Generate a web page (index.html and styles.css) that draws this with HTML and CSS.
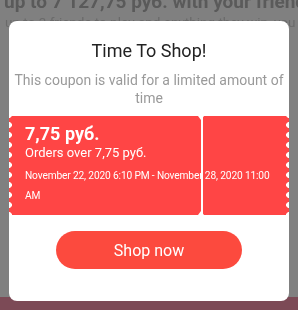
FILE: index.html
```html
<!DOCTYPE html>
<html>
<head>
  <meta charset="UTF-8">
  <title>Time To Shop</title>
  <link rel="stylesheet" href="styles.css">
</head>
<body>
  <div class="page">
    <p class="promo-title">up to 7 127,75 руб. with your friends</p>
    <p class="promo-text">up to 3 friends to play and anything they win, you get</p>
    <div class="page-footer"></div>
  </div>

  <div class="overlay">
    <div class="modal">
      <h2 class="modal-title">Time To Shop!</h2>
      <p class="modal-text">This coupon is valid for a limited amount of time</p>

      <div class="coupon">
        <span class="coupon-divider"></span>
        <div class="coupon-amount">7,75 руб.</div>
        <div class="coupon-cond">Orders over 7,75 руб.</div>
        <div class="coupon-dates">November 22, 2020 6:10 PM - November 28, 2020 11:00 AM</div>
      </div>

      <button class="shop-btn">Shop now</button>
    </div>
  </div>
</body>
</html>
```

FILE: styles.css
```css
:root {
  --overlay-color: #808080;
  --coupon-red: #ff4545;
  --button-red: #fc4a3e;
  --title-color: #222;
  --muted-color: #9a9a9a;
}

* {
  margin: 0;
  padding: 0;
  box-sizing: border-box;
}

body {
  font-family: Roboto, 'Liberation Sans', Arial, sans-serif;
  width: 298px;
  height: 310px;
  overflow: hidden;
  background-color: var(--overlay-color);
}

/* dimmed page behind the popup */
.page {
  height: 310px;
  display: flex;
  flex-direction: column;
  overflow: hidden;
  filter: blur(0.6px);
}

.promo-title {
  font-size: 19px;
  font-weight: 700;
  color: #5a5a5a;
  line-height: 20px;
  margin-top: -8px;
  padding-left: 4px;
  white-space: nowrap;
  overflow: hidden;
}

.promo-text {
  font-size: 13.5px;
  color: #6a6a6a;
  line-height: 18px;
  margin-top: 1px;
  padding-left: 5px;
  white-space: nowrap;
  overflow: hidden;
}

.page-footer {
  margin-top: auto;
  height: 13px;
  background-color: #7c4a56;
}

/* popup */
.overlay {
  position: fixed;
  inset: 0;
  display: flex;
  justify-content: center;
  align-items: flex-start;
  padding-top: 21px;
}

.modal {
  width: 280px;
  background-color: white;
  border-radius: 8px;
  overflow: hidden;
  display: flex;
  flex-direction: column;
  align-items: center;
  padding: 19px 0 32px;
}

.modal-title {
  font-size: 18px;
  font-weight: 400;
  color: var(--title-color);
  line-height: 22px;
}

.modal-text {
  font-size: 14px;
  color: var(--muted-color);
  line-height: 18px;
  text-align: center;
  margin-top: 9px;
  padding: 0 4px;
}

.coupon {
  position: relative;
  width: 100%;
  margin-top: 9px;
  height: 99px;
  background-color: var(--coupon-red);
  color: white;
  padding: 7px 16px 0;
}

.coupon::before,
.coupon::after {
  content: "";
  position: absolute;
  top: 0;
  bottom: 0;
  width: 3px;
  background-repeat: repeat-y;
  background-size: 3px 10px;
  background-position: 0 4px;
}

.coupon::before {
  left: 0;
  background-image: radial-gradient(circle at 0 5px, white 2.6px, transparent 3.2px);
}

.coupon::after {
  right: 0;
  background-image: radial-gradient(circle at 3px 5px, white 2.6px, transparent 3.2px);
}

.coupon-divider {
  position: absolute;
  top: 0;
  bottom: 0;
  left: 192px;
  width: 1.5px;
  background-color: white;
}

.coupon-divider::before,
.coupon-divider::after {
  content: "";
  position: absolute;
  left: -3px;
  border-left: 3.75px solid transparent;
  border-right: 3.75px solid transparent;
}

.coupon-divider::before {
  top: 0;
  border-top: 4px solid white;
}

.coupon-divider::after {
  bottom: 0;
  border-bottom: 4px solid white;
}

.coupon-amount {
  position: relative;
  font-size: 18px;
  font-weight: 700;
  line-height: 22px;
}

.coupon-cond {
  position: relative;
  font-size: 13px;
  line-height: 16px;
}

.coupon-dates {
  position: relative;
  font-size: 10.2px;
  letter-spacing: -0.15px;
  line-height: 20px;
  margin-top: 5px;
}

.shop-btn {
  margin-top: 16px;
  width: 186px;
  height: 38px;
  border: none;
  border-radius: 19px;
  background-color: var(--button-red);
  color: white;
  font-family: inherit;
  font-size: 16px;
  cursor: pointer;
}
```
